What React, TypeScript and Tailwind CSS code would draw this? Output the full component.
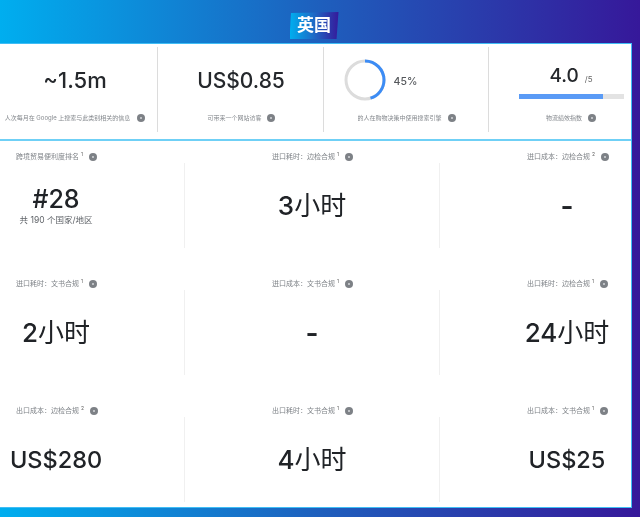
import React from "react";

const font = { fontFamily: '"Inter", "Noto Sans CJK SC", sans-serif' };

function Help({ className = "" }: { className?: string }) {
  return (
    <span className={"inline-flex w-[8px] h-[8px] rounded-full bg-[#7d8186] items-center justify-center shrink-0 " + className}>
      <span className="w-[2px] h-[2px] rounded-full bg-[#d5d7da]" />
    </span>
  );
}

function Metric({ children, label, gap = "gap-[6px]", divider = true, width }: { children: React.ReactNode; label: string; gap?: string; divider?: boolean; width: string }) {
  return (
    <div className={"relative h-full flex flex-col items-center shrink-0 " + width}>
      <div className="h-[73px] flex items-center justify-center w-full">{children}</div>
      <div className={"flex items-center whitespace-nowrap text-[6px] leading-[9px] text-[#85898e] -mt-[4px] " + gap}>
        <span>{label}</span>
        <Help />
      </div>
      {divider && <div className="absolute right-0 top-[3px] h-[85px] w-px bg-[#dcdcdc]" />}
    </div>
  );
}

function Value({ value }: { value: string }) {
  const m = value.match(/^(\d+)(小时)$/);
  if (m) {
    return (
      <div className="whitespace-nowrap text-[#202327] leading-[30px] text-[26px]">
        <span className="font-medium">{m[1]}</span>
        <span>{m[2]}</span>
      </div>
    );
  }
  const size = value === "#28" ? "text-[25px] leading-[28px] font-medium" : value === "-" ? "text-[28px] leading-[30px] font-semibold" : "text-[23.5px] leading-[30px] font-medium";
  return <div className={"whitespace-nowrap text-[#202327] " + size}>{value}</div>;
}

function Cell({ label, sup, value, sub, col, row }: { label: string; sup: string; value: string; sub?: string; col: number; row: number }) {
  const pad = col === 0 ? "pl-[16px]" : "pl-[88px]";
  const h = row === 2 ? "h-[97px]" : "h-[127px]";
  return (
    <div className={"relative " + pad + " " + h}>
      <div className="flex items-center h-[10px] whitespace-nowrap text-[7px] text-[#7f8388] gap-[6px]">
        <span>
          {label}
          <sup className="text-[5px] ml-[2px] text-[#666]">{sup}</sup>
        </span>
        <Help />
      </div>
      <div className="w-[80px] h-[85px] flex flex-col items-center justify-center mt-[1px]">
        <div className={"flex flex-col items-center " + (sub ? "mb-[2px]" : "")}>
          <Value value={value} />
          {sub && <div className="whitespace-nowrap text-[8.5px] leading-[10px] text-[#5f6368] mt-[2px]">{sub}</div>}
        </div>
      </div>
      {col > 0 && <div className="absolute left-0 top-[11px] h-[85px] w-px bg-[#f0f0f0]" />}
    </div>
  );
}

const cells = [
  { label: "跨境贸易便利度排名", sup: "1", value: "#28", sub: "共 190 个国家/地区" },
  { label: "进口耗时：边检合规", sup: "1", value: "3小时" },
  { label: "进口成本：边检合规", sup: "2", value: "-" },
  { label: "进口耗时：文书合规", sup: "1", value: "2小时" },
  { label: "进口成本：文书合规", sup: "1", value: "-" },
  { label: "出口耗时：边检合规", sup: "1", value: "24小时" },
  { label: "出口成本：边检合规", sup: "2", value: "US$280" },
  { label: "出口耗时：文书合规", sup: "1", value: "4小时" },
  { label: "出口成本：文书合规", sup: "1", value: "US$25" },
];

export default function App() {
  return (
    <div style={font} className="w-[640px] h-[517px] overflow-hidden bg-[linear-gradient(90deg,#00aeef_0%,#1e5fbd_50%,#36189a_100%)] flex flex-col blur-[0.35px]">
      <div className="h-[43px] flex items-end justify-center pb-[4px] pr-[12px]">
        <div className="w-[49px] h-[27px] flex items-center justify-center text-white font-bold text-[17px] leading-none bg-[linear-gradient(90deg,#00aeef_0%,#1c6fc9_45%,#36189a_100%)] [clip-path:polygon(3%_4%,100%_0,96%_100%,0_100%)]">
          英国
        </div>
      </div>
      <div className="w-[632px] h-[465px] bg-white border-r-[1px] border-y-[1px] border-[#3fbdf5] overflow-hidden">
        <div className="flex h-[97px] border-b-[2px] border-[#6fd0f6]">
          <Metric width="w-[158px] pr-[8px]" label="人次每月在 Google 上搜索与此类别相关的信息" gap="gap-[7px]">
            <span className="text-[22px] font-medium text-[#25282c]">~1.5m</span>
          </Metric>
          <Metric width="w-[166px]" label="可带来一个网站访客" gap="gap-[5px]">
            <span className="text-[21px] font-medium text-[#25282c]">US$0.85</span>
          </Metric>
          <Metric width="w-[165px]" label="的人在购物决策中使用搜索引擎">
            <div className="flex items-center gap-[8px] -ml-[2px] mr-[50px] mt-[-1px]">
              <svg width="42" height="42" viewBox="0 0 42 42" className="-rotate-90">
                <circle cx="21" cy="21" r="19" fill="none" stroke="#dcdcdc" strokeWidth="3" />
                <circle cx="21" cy="21" r="19" fill="none" stroke="#3c8cf5" strokeWidth="3" strokeDasharray="53.7 119.4" />
              </svg>
              <span className="text-[10.5px] font-medium text-[#55585c] mt-[3px]">45%</span>
            </div>
          </Metric>
          <Metric width="w-[164px]" label="物流绩效指数" divider={false}>
            <div className="flex flex-col items-center">
              <div className="flex items-baseline gap-[6px]">
                <span className="text-[19px] font-medium text-[#25282c]">4.0</span>
                <span className="text-[8px] text-[#666]">/5</span>
              </div>
              <div className="w-[105px] h-[5px] bg-[#e3e3e3] mt-[3px]">
                <div className="w-[80%] h-full bg-[#5a9bf6]" />
              </div>
            </div>
          </Metric>
        </div>
        <div className="grid grid-cols-[184px_255px_192px] pt-[11px]">
          {cells.map((c, i) => (
            <Cell key={i} col={i % 3} row={Math.floor(i / 3)} {...c} />
          ))}
        </div>
      </div>
    </div>
  );
}
